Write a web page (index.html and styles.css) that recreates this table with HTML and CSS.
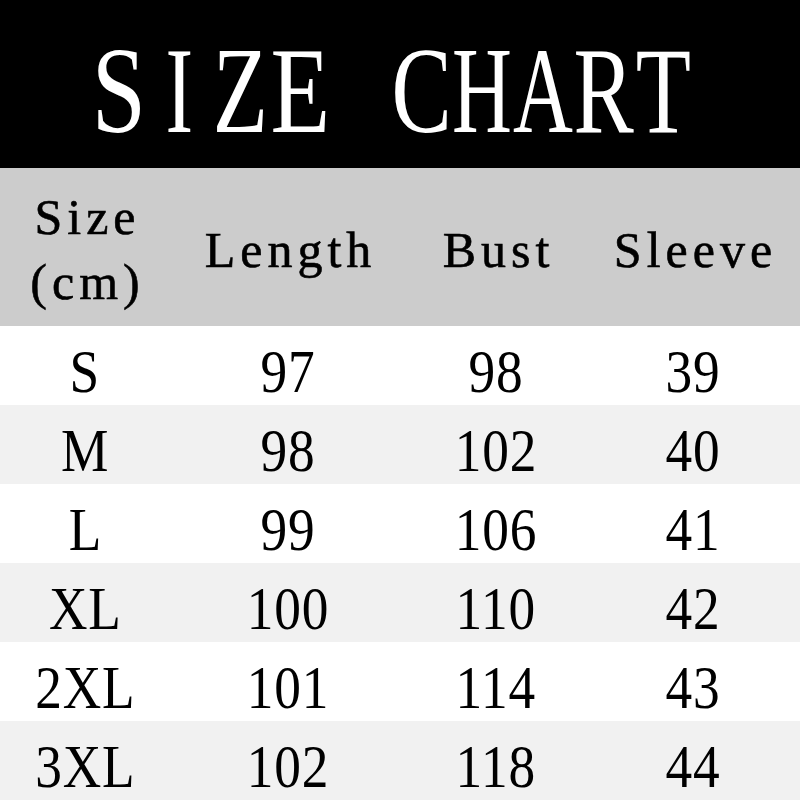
FILE: index.html
```html
<!DOCTYPE html>
<html>
<head>
<meta charset="utf-8">
<link rel="stylesheet" href="styles.css">
</head>
<body>
<div class="chart">
  <div class="title"><h1 class="title-text"><span class="ch"><span class="g wide">S</span></span><span class="ch"><span class="g">I</span></span><span class="ch"><span class="g mid">Z</span></span><span class="ch"><span class="g wide">E</span></span><span class="ch"> </span><span class="ch"><span class="g mid">C</span></span><span class="ch"><span class="g">H</span></span><span class="ch"><span class="g">A</span></span><span class="ch"><span class="g mid">R</span></span><span class="ch"><span class="g mid">T</span></span></h1></div>
  <div class="row head">
    <div class="cell"><span class="h">Size<br>(cm)</span></div>
    <div class="cell"><span class="h">Length</span></div>
    <div class="cell"><span class="h">Bust</span></div>
    <div class="cell"><span class="h">Sleeve</span></div>
  </div>
  <div class="row"><div class="cell"><span class="v">S</span></div><div class="cell"><span class="v">97</span></div><div class="cell"><span class="v">98</span></div><div class="cell"><span class="v">39</span></div></div>
  <div class="row alt"><div class="cell"><span class="v">M</span></div><div class="cell"><span class="v">98</span></div><div class="cell"><span class="v">102</span></div><div class="cell"><span class="v">40</span></div></div>
  <div class="row"><div class="cell"><span class="v">L</span></div><div class="cell"><span class="v">99</span></div><div class="cell"><span class="v">106</span></div><div class="cell"><span class="v">41</span></div></div>
  <div class="row alt"><div class="cell"><span class="v">XL</span></div><div class="cell"><span class="v">100</span></div><div class="cell"><span class="v">110</span></div><div class="cell"><span class="v">42</span></div></div>
  <div class="row"><div class="cell"><span class="v">2XL</span></div><div class="cell"><span class="v">101</span></div><div class="cell"><span class="v">114</span></div><div class="cell"><span class="v">43</span></div></div>
  <div class="row alt"><div class="cell"><span class="v">3XL</span></div><div class="cell"><span class="v">102</span></div><div class="cell"><span class="v">118</span></div><div class="cell"><span class="v">44</span></div></div>
</div>
</body>
</html>
```
FILE: styles.css
```css
html, body {
  margin: 0;
  padding: 0;
  background: #fff;
}
.chart {
  width: 800px;
  height: 800px;
  overflow: hidden;
  font-family: "Liberation Serif", "Times New Roman", serif;
  color: #000;
}
.title {
  height: 168px;
  background: #000;
  display: flex;
  align-items: center;
  justify-content: center;
}
.title-text {
  display: flex;
  margin: 0 17px 0 0;
  color: #fff;
  font-size: 122px;
  font-weight: normal;
  line-height: 1;
  padding-top: 14px;
  white-space: pre;
}
.ch {
  display: flex;
  justify-content: center;
  width: 60.5px;
}
.g {
  display: inline-block;
  transform: scaleX(0.68);
}
.g.mid {
  transform: scaleX(0.74);
}
.g.wide {
  transform: scaleX(0.8);
}
.row {
  display: grid;
  grid-template-columns: 170px 236px 180px 214px;
  height: 79px;
  background: #fff;
}
.row.alt {
  background: #f1f1f1;
}
.row.head {
  height: 158px;
  background: #cccccc;
}
.cell {
  display: flex;
  align-items: center;
  justify-content: center;
  line-height: 1;
  padding-top: 10px;
}
.head .cell {
  padding-top: 6px;
}
.v {
  display: inline-block;
  font-size: 62px;
  letter-spacing: 1px;
  transform: scaleX(0.86);
  white-space: nowrap;
}
.h {
  display: block;
  font-size: 50px;
  letter-spacing: 5px;
  line-height: 65px;
  text-align: center;
  margin-right: -5px;
  -webkit-text-stroke: 0.6px #000;
}
```
